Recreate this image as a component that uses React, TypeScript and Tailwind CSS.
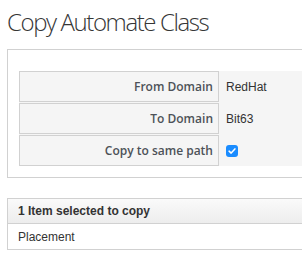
const rows = [
  { label: "From Domain", value: "RedHat" },
  { label: "To Domain", value: "Bit63" },
];

function CheckMark() {
  return (
    <span className="flex h-[12px] w-[12px] items-center justify-center rounded-[3px] bg-[#1a8cff]">
      <svg viewBox="0 0 12 12" className="h-[10px] w-[10px]">
        <path d="M2.5 6.2 L5 8.5 L9.5 3.5" fill="none" stroke="#fff" strokeWidth="1.8" strokeLinecap="round" strokeLinejoin="round" />
      </svg>
    </span>
  );
}

export default function App() {
  return (
    <div className="h-[260px] w-[302px] overflow-hidden bg-white">
      {/* Page title */}
      <h1 className="pl-[7px] pt-[6px] text-[24px] font-light leading-[32px] tracking-[-1.4px] text-[#363636] whitespace-nowrap [font-family:'Open_Sans',sans-serif]">
        Copy Automate Class
      </h1>

      {/* Form panel */}
      <div className="ml-[7px] mt-[11px] w-[340px] border border-[#d1d1d1] pl-[11px] pt-[21px] pb-[11px]">
        <div className="flex flex-col gap-px bg-[#f5f5f5]">
          {rows.map((row) => (
            <div key={row.label} className="flex h-[31px]">
              <div className="flex w-[200px] items-center justify-end border border-[#d1d1d1] bg-[#f5f5f5] pr-[5px] text-[12px] font-semibold text-[#4d5258] [font-family:'Open_Sans',sans-serif]">
                {row.label}
              </div>
              <div className="flex items-center pl-[7px] text-[12px] text-[#333] [font-family:'Liberation_Sans',Arial,sans-serif]">
                {row.value}
              </div>
            </div>
          ))}
          <div className="flex h-[31px]">
            <div className="flex w-[200px] items-center justify-end border border-[#d1d1d1] bg-[#f5f5f5] pr-[5px] text-[12px] font-semibold text-[#4d5258] [font-family:'Open_Sans',sans-serif]">
              Copy to same path
            </div>
            <div className="flex items-center pl-[7px]">
              <CheckMark />
            </div>
          </div>
        </div>
      </div>

      {/* Selected items panel */}
      <div className="ml-[7px] mt-[20px] w-[340px] border border-[#d1d1d1] text-[12px] text-[#333] [font-family:'Liberation_Sans',Arial,sans-serif]">
        <div className="flex h-[25px] items-center border-b border-[#d1d1d1] bg-gradient-to-b from-[#fafafa] to-[#ededed] pl-[10px] font-bold">
          1 Item selected to copy
        </div>
        <div className="flex h-[25px] items-center pl-[10px]">Placement</div>
      </div>
    </div>
  );
}
